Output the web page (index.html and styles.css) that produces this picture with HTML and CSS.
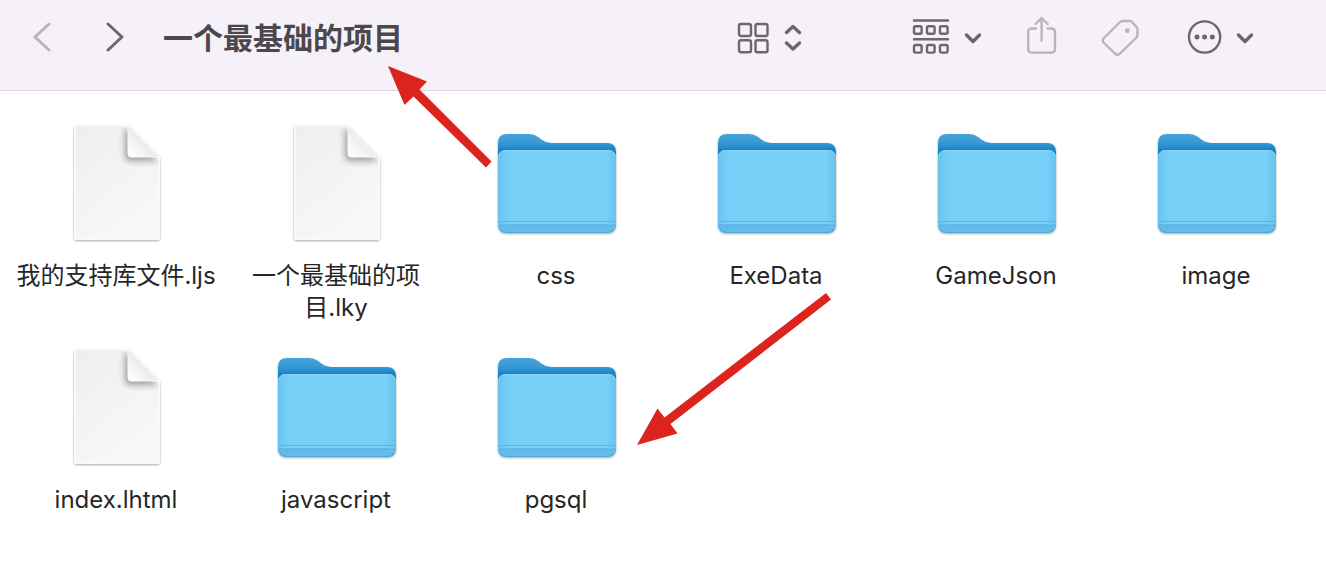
FILE: index.html
```
<!DOCTYPE html>
<html lang="zh-CN">
<head>
    <meta charset="UTF-8">
    <meta name="viewport" content="width=device-width, initial-scale=1">
    <title>一个最基础的项目</title>
    <link rel="stylesheet" href="styles.css">
</head>
<body>
    <!-- 公用图标 -->
    <svg class="symbols" width="0" height="0" aria-hidden="true">
        <defs>
            <linearGradient id="docFill" x1="0" y1="0" x2="0.6" y2="1">
                <stop offset="0" stop-color="#eeeeee"/>
                <stop offset="1" stop-color="#f8f8f8"/>
            </linearGradient>
            <linearGradient id="docFold" x1="0.1" y1="1" x2="0.6" y2="0.5">
                <stop offset="0" stop-color="#ffffff"/>
                <stop offset="1" stop-color="#e8e8e8"/>
            </linearGradient>
            <linearGradient id="folderBack" x1="0" y1="13" x2="0" y2="33" gradientUnits="userSpaceOnUse">
                <stop offset="0" stop-color="#46a4da"/>
                <stop offset="0.5" stop-color="#3899d3"/>
                <stop offset="0.85" stop-color="#1583c6"/>
            </linearGradient>
            <linearGradient id="folderFront" x1="0" y1="0" x2="1" y2="0">
                <stop offset="0" stop-color="#66c3ee"/>
                <stop offset="0.09" stop-color="#78cff8"/>
                <stop offset="0.91" stop-color="#78cff8"/>
                <stop offset="1" stop-color="#66c3ee"/>
            </linearGradient>
            <filter id="softShadow" x="-20%" y="-20%" width="140%" height="140%">
                <feDropShadow dx="0" dy="1" stdDeviation="1" flood-color="#000" flood-opacity="0.35"/>
            </filter>
            <filter id="foldShadow" x="-50%" y="-50%" width="200%" height="200%">
                <feGaussianBlur stdDeviation="3"/>
            </filter>
            <clipPath id="docClip">
                <path d="M24 5H75L108 38V118Q108 120 106 120H24Q22 120 22 118V7Q22 5 24 5Z"/>
            </clipPath>
        </defs>
        <symbol id="doc" viewBox="0 0 128 128">
            <path d="M25 5H73Q76 5 78 7L106 35Q108 37 108 40V117Q108 120 105 120H25Q22 120 22 117V8Q22 5 25 5Z" fill="url(#docFill)" filter="url(#softShadow)"/>
            <g clip-path="url(#docClip)">
                <path d="M73 9V36Q73 41 78 41H106L76 9Z" fill="#666" opacity="0.6" filter="url(#foldShadow)"/>
                <path d="M25 5H73Q76 5 78 7L106 35Q108 37 108 40V117Q108 120 105 120H25Q22 120 22 117V8Q22 5 25 5Z" fill="none" stroke="#fafafa" stroke-width="3"/>
            </g>
            <path d="M76 6V34Q76 37 79 37H107Z" fill="url(#docFold)" stroke="#fafafa" stroke-linejoin="round"/>
        </symbol>
        <symbol id="folder" viewBox="0 0 128 128">
            <path d="M6 23Q6 14 15 14H37Q42 14 46 17L50 20Q54 23 59 23H115Q124 23 124 32V104Q124 113 115 113H15Q6 113 6 104Z" fill="url(#folderBack)" filter="url(#softShadow)"/>
            <path d="M6 38Q6 30 14 30H116Q124 30 124 38V104Q124 113 115 113H15Q6 113 6 104Z" fill="url(#folderFront)"/>
            <path d="M7 36Q8 30.500 14 30.500H116Q122 30.500 123 36" fill="none" stroke="#8ad6fa"/>
            <path d="M6 104V106Q8 113 15 113H115Q122 113 124 106V104Z" fill="#62bbe8"/>
            <path d="M6 101.500H124M6 105.500H124" stroke="#58b4e1"/>
            <path d="M8 109Q10 112.500 15 112.500H115Q120 112.500 122 109" fill="none" stroke="#4fa8d5"/>
        </symbol>
    </svg>

    <header class="toolbar">
        <nav class="history">
            <button class="tool disabled" aria-label="后退">
                <svg width="32" height="48"><path d="M23 10L9 23L23 36"/></svg>
            </button>
            <button class="tool" aria-label="前进">
                <svg width="32" height="48"><path d="M8 10L22 23L8 36"/></svg>
            </button>
        </nav>
        <h1 class="title">一个最基础的项目</h1>
        <div class="actions">
            <button class="tool view" aria-label="显示方式">
                <svg width="68" height="48">
                    <g class="thin">
                        <rect x="3" y="10" width="12" height="12" rx="2"/>
                        <rect x="19.500" y="10" width="12" height="12" rx="2"/>
                        <rect x="3" y="26.300" width="12" height="12" rx="2"/>
                        <rect x="19.500" y="26.300" width="12" height="12" rx="2"/>
                    </g>
                    <path class="bold" d="M50.500 18.500L57 12.500L63.500 18.500M50.500 29L57 35L63.500 29"/>
                </svg>
            </button>
            <button class="tool" aria-label="分组">
                <svg width="74" height="48">
                    <g class="thin">
                        <path d="M3 6.500H37M3 25.300H37"/>
                        <rect x="3" y="12.200" width="7.600" height="7.600" rx="1.500"/>
                        <rect x="16" y="12.200" width="7.600" height="7.600" rx="1.500"/>
                        <rect x="29" y="12.200" width="7.600" height="7.600" rx="1.500"/>
                        <rect x="3" y="31" width="7.600" height="7.600" rx="1.500"/>
                        <rect x="16" y="31" width="7.600" height="7.600" rx="1.500"/>
                        <rect x="29" y="31" width="7.600" height="7.600" rx="1.500"/>
                    </g>
                    <path class="bold" d="M55.500 21L62 27.500L68.500 21"/>
                </svg>
            </button>
            <button class="tool disabled" aria-label="共享">
                <svg width="32" height="48">
                    <g class="thin">
                        <path d="M9 14.500H5Q1.200 14.500 1.200 18V35Q1.200 38.600 5 38.600H24Q28 38.600 28 35V18Q28 14.500 24 14.500H20.500"/>
                        <path d="M14.600 26.500V4M8.500 10L14.600 4L20.700 10"/>
                    </g>
                </svg>
            </button>
            <button class="tool disabled" aria-label="标签">
                <svg width="38" height="48">
                    <path class="thin" d="M22 7H28.500Q30 7 31 8L35.500 13Q36.500 14 36.500 15.500V20.500Q36.500 22.500 35 24L18.500 40Q16.500 41.500 14.500 40L2.500 28.500Q1 26.500 2.500 24.500L19 8Q20 7 22 7Z"/>
                    <circle class="dot" cx="26.300" cy="16.700" r="2.400"/>
                </svg>
            </button>
            <button class="tool" aria-label="更多">
                <svg width="74" height="48">
                    <circle class="thin" cx="23.600" cy="23" r="15.600"/>
                    <circle class="dot" cx="16" cy="23" r="2.500"/>
                    <circle class="dot" cx="23.600" cy="23" r="2.500"/>
                    <circle class="dot" cx="31.300" cy="23" r="2.500"/>
                    <path class="bold" d="M57.500 21L64 27.500L70.500 21"/>
                </svg>
            </button>
        </div>
    </header>

    <main class="files">
        <a class="file" href="#"><svg class="icon"><use href="#doc"/></svg><span class="name">我的支持库文件.ljs</span></a>
        <a class="file" href="#"><svg class="icon"><use href="#doc"/></svg><span class="name">一个最基础的项目.lky</span></a>
        <a class="file" href="#"><svg class="icon"><use href="#folder"/></svg><span class="name">css</span></a>
        <a class="file" href="#"><svg class="icon"><use href="#folder"/></svg><span class="name">ExeData</span></a>
        <a class="file" href="#"><svg class="icon"><use href="#folder"/></svg><span class="name">GameJson</span></a>
        <a class="file" href="#"><svg class="icon"><use href="#folder"/></svg><span class="name">image</span></a>
        <a class="file" href="#"><svg class="icon"><use href="#doc"/></svg><span class="name">index.lhtml</span></a>
        <a class="file" href="#"><svg class="icon"><use href="#folder"/></svg><span class="name">javascript</span></a>
        <a class="file" href="#"><svg class="icon"><use href="#folder"/></svg><span class="name">pgsql</span></a>
    </main>

    <!-- 红色标注箭头 -->
    <svg class="arrow arrow-title" width="104" height="102" aria-hidden="true">
        <path d="M0 0L39 15.500L31.500 23.500L103.500 95.500L98 101.500L25.500 30.500L16.500 39Z"/>
    </svg>
    <svg class="arrow arrow-pgsql" width="196" height="154" aria-hidden="true">
        <path d="M0 153L20.500 116.500L27.500 125.500L189 1L194 7.500L33.500 132L40.500 141.500Z"/>
    </svg>
</body>
</html>
```

FILE: styles.css
```
* {
    margin: 0;
    padding: 0;
    box-sizing: border-box;
}

body {
    position: relative;
    font-family: Inter, "Noto Sans CJK SC", sans-serif;
    background: #fff;
    color: #262626;
}

.symbols {
    position: absolute;
}

/* 工具栏 */
.toolbar {
    display: flex;
    align-items: center;
    padding: 14px 71px 28px 26px;
    background: #f6f1f8;
    border-bottom: 1px solid #d9d5da;
}

.history,
.actions {
    display: flex;
    align-items: center;
    gap: 42px;
}

.title {
    flex: 1;
    margin-left: 31px;
    font-size: 30px;
    font-weight: 700;
    line-height: 48px;
    color: #4b484c;
    white-space: nowrap;
}

.tool {
    display: block;
    border: none;
    background: none;
    color: #6c666d;
    cursor: pointer;
}

.tool svg {
    display: block;
    fill: none;
    stroke: currentColor;
    stroke-width: 3;
    stroke-linecap: round;
    stroke-linejoin: round;
}

.tool.disabled {
    color: #b9b4bb;
}

.tool .thin {
    stroke-width: 2.4;
}

.tool .bold {
    stroke-width: 3.4;
}

.tool .dot {
    fill: currentColor;
    stroke: none;
}

.view {
    margin-right: 65px;
}

/* 文件列表 */
.files {
    display: grid;
    grid-template-columns: repeat(auto-fill, 220px);
    row-gap: 20px;
    padding: 29px 0 36px 6px;
}

.file {
    display: flex;
    flex-direction: column;
    align-items: center;
    gap: 12px;
    color: inherit;
    text-decoration: none;
}

.icon {
    width: 128px;
    height: 128px;
}

.name {
    max-width: 212px;
    font-size: 24px;
    line-height: 32px;
    text-align: center;
}

/* 标注箭头 */
.arrow {
    position: absolute;
    fill: #dc231e;
    pointer-events: none;
}

.arrow-title {
    left: 388px;
    top: 66px;
}

.arrow-pgsql {
    left: 637px;
    top: 292px;
}
```
